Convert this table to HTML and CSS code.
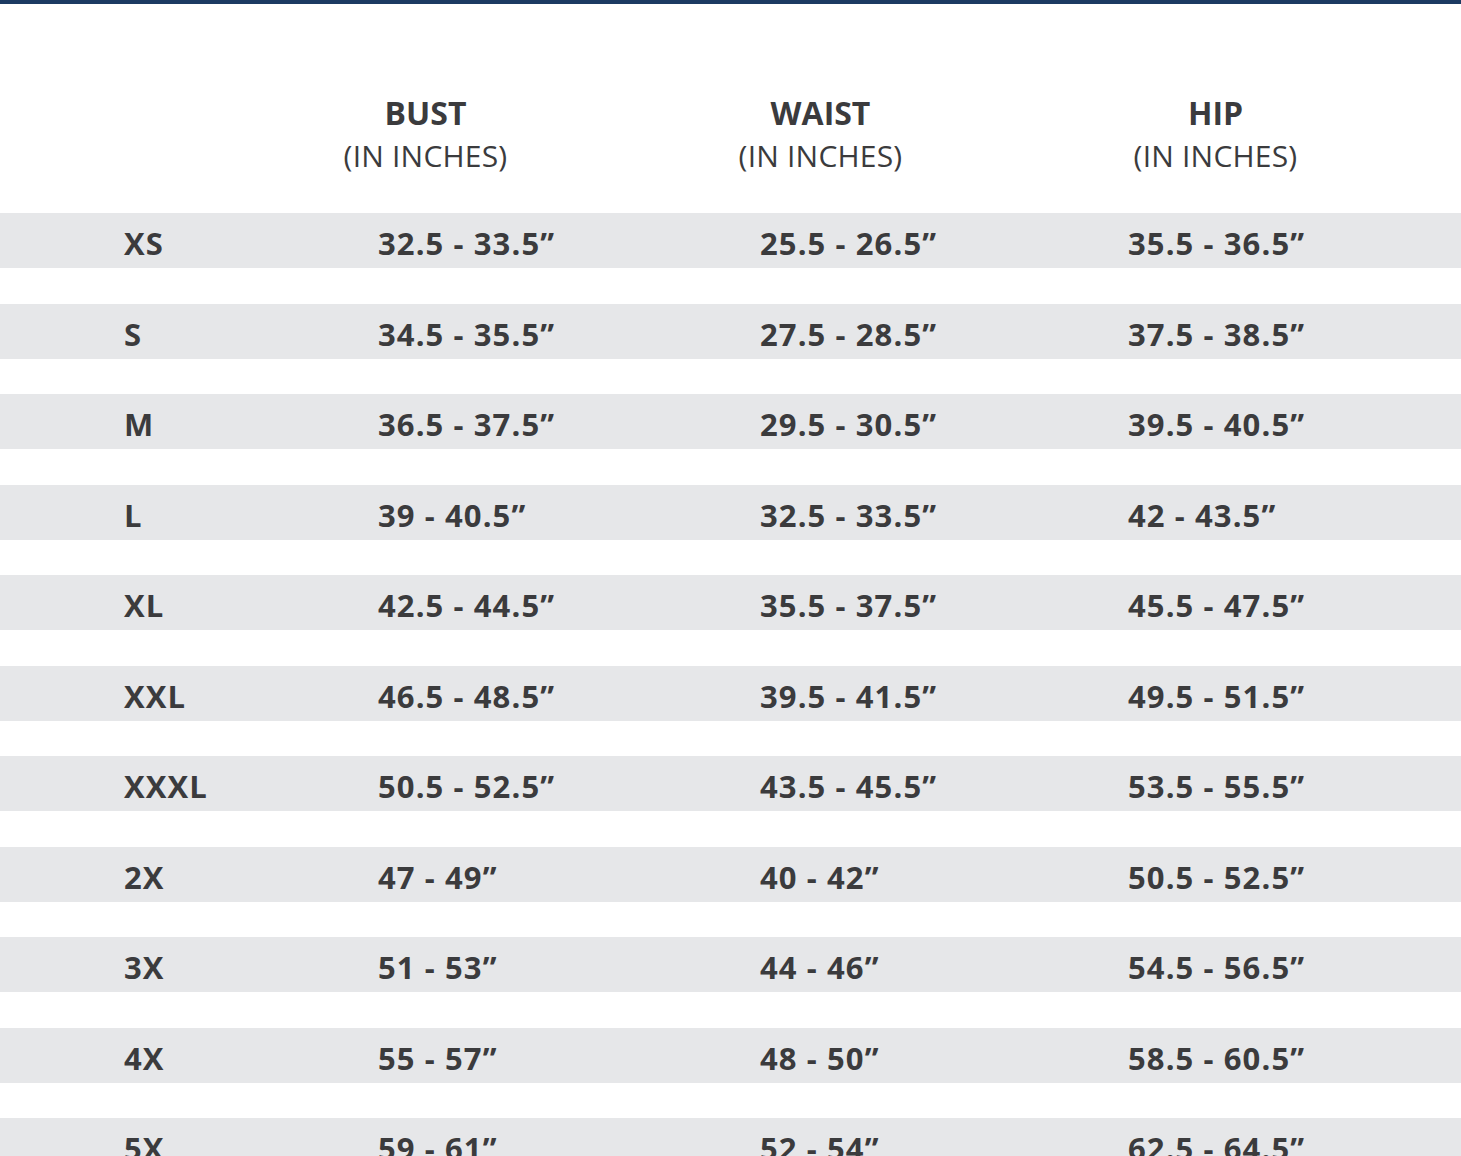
FILE: index.html
```html
<!DOCTYPE html>
<html lang="en">
<head>
<meta charset="utf-8">
<title>Size Chart</title>
<link rel="stylesheet" href="styles.css">
</head>
<body>
<div class="topbar"></div>
<div class="chart">
  <div class="head">
    <div class="hcell"></div>
    <div class="hcell"><span class="htitle">BUST</span><span class="hunit">(IN INCHES)</span></div>
    <div class="hcell"><span class="htitle">WAIST</span><span class="hunit">(IN INCHES)</span></div>
    <div class="hcell"><span class="htitle">HIP</span><span class="hunit">(IN INCHES)</span></div>
  </div>
  <div class="rows">
    <div class="row"><span>XS</span><span>32.5 - 33.5”</span><span>25.5 - 26.5”</span><span>35.5 - 36.5”</span></div>
    <div class="row"><span>S</span><span>34.5 - 35.5”</span><span>27.5 - 28.5”</span><span>37.5 - 38.5”</span></div>
    <div class="row"><span>M</span><span>36.5 - 37.5”</span><span>29.5 - 30.5”</span><span>39.5 - 40.5”</span></div>
    <div class="row"><span>L</span><span>39 - 40.5”</span><span>32.5 - 33.5”</span><span>42 - 43.5”</span></div>
    <div class="row"><span>XL</span><span>42.5 - 44.5”</span><span>35.5 - 37.5”</span><span>45.5 - 47.5”</span></div>
    <div class="row"><span>XXL</span><span>46.5 - 48.5”</span><span>39.5 - 41.5”</span><span>49.5 - 51.5”</span></div>
    <div class="row"><span>XXXL</span><span>50.5 - 52.5”</span><span>43.5 - 45.5”</span><span>53.5 - 55.5”</span></div>
    <div class="row"><span>2X</span><span>47 - 49”</span><span>40 - 42”</span><span>50.5 - 52.5”</span></div>
    <div class="row"><span>3X</span><span>51 - 53”</span><span>44 - 46”</span><span>54.5 - 56.5”</span></div>
    <div class="row"><span>4X</span><span>55 - 57”</span><span>48 - 50”</span><span>58.5 - 60.5”</span></div>
    <div class="row"><span>5X</span><span>59 - 61”</span><span>52 - 54”</span><span>62.5 - 64.5”</span></div>
  </div>
</div>
</body>
</html>
```

FILE: styles.css
```css
html, body {
  margin: 0;
  padding: 0;
  background: #ffffff;
  overflow: hidden;
}
body {
  font-family: "Open Sans", "Liberation Sans", sans-serif;
  color: #3b3b3d;
}
.topbar {
  height: 4px;
  background: #1c3a62;
}
.chart {
  display: flex;
  flex-direction: column;
}
.head {
  display: grid;
  grid-template-columns: 228px 395px 395px 395px;
  padding-top: 88px;
  height: 121px;
}
.hcell {
  display: flex;
  flex-direction: column;
  align-items: center;
}
.htitle {
  font-weight: 700;
  font-size: 32px;
  line-height: 42px;
}
.hunit {
  font-weight: 400;
  font-size: 30px;
  line-height: 44px;
  letter-spacing: 0.2px;
}
.rows {
  display: flex;
  flex-direction: column;
  gap: 35.5px;
}
.row {
  display: grid;
  grid-template-columns: 254px 382px 368px 1fr;
  padding-left: 124px;
  height: 55px;
  align-items: center;
  background: #e6e7e9;
  font-weight: 700;
  font-size: 31px;
  letter-spacing: 1.1px;
  line-height: 55px;
  padding-top: 3px;
  box-sizing: border-box;
}
```
